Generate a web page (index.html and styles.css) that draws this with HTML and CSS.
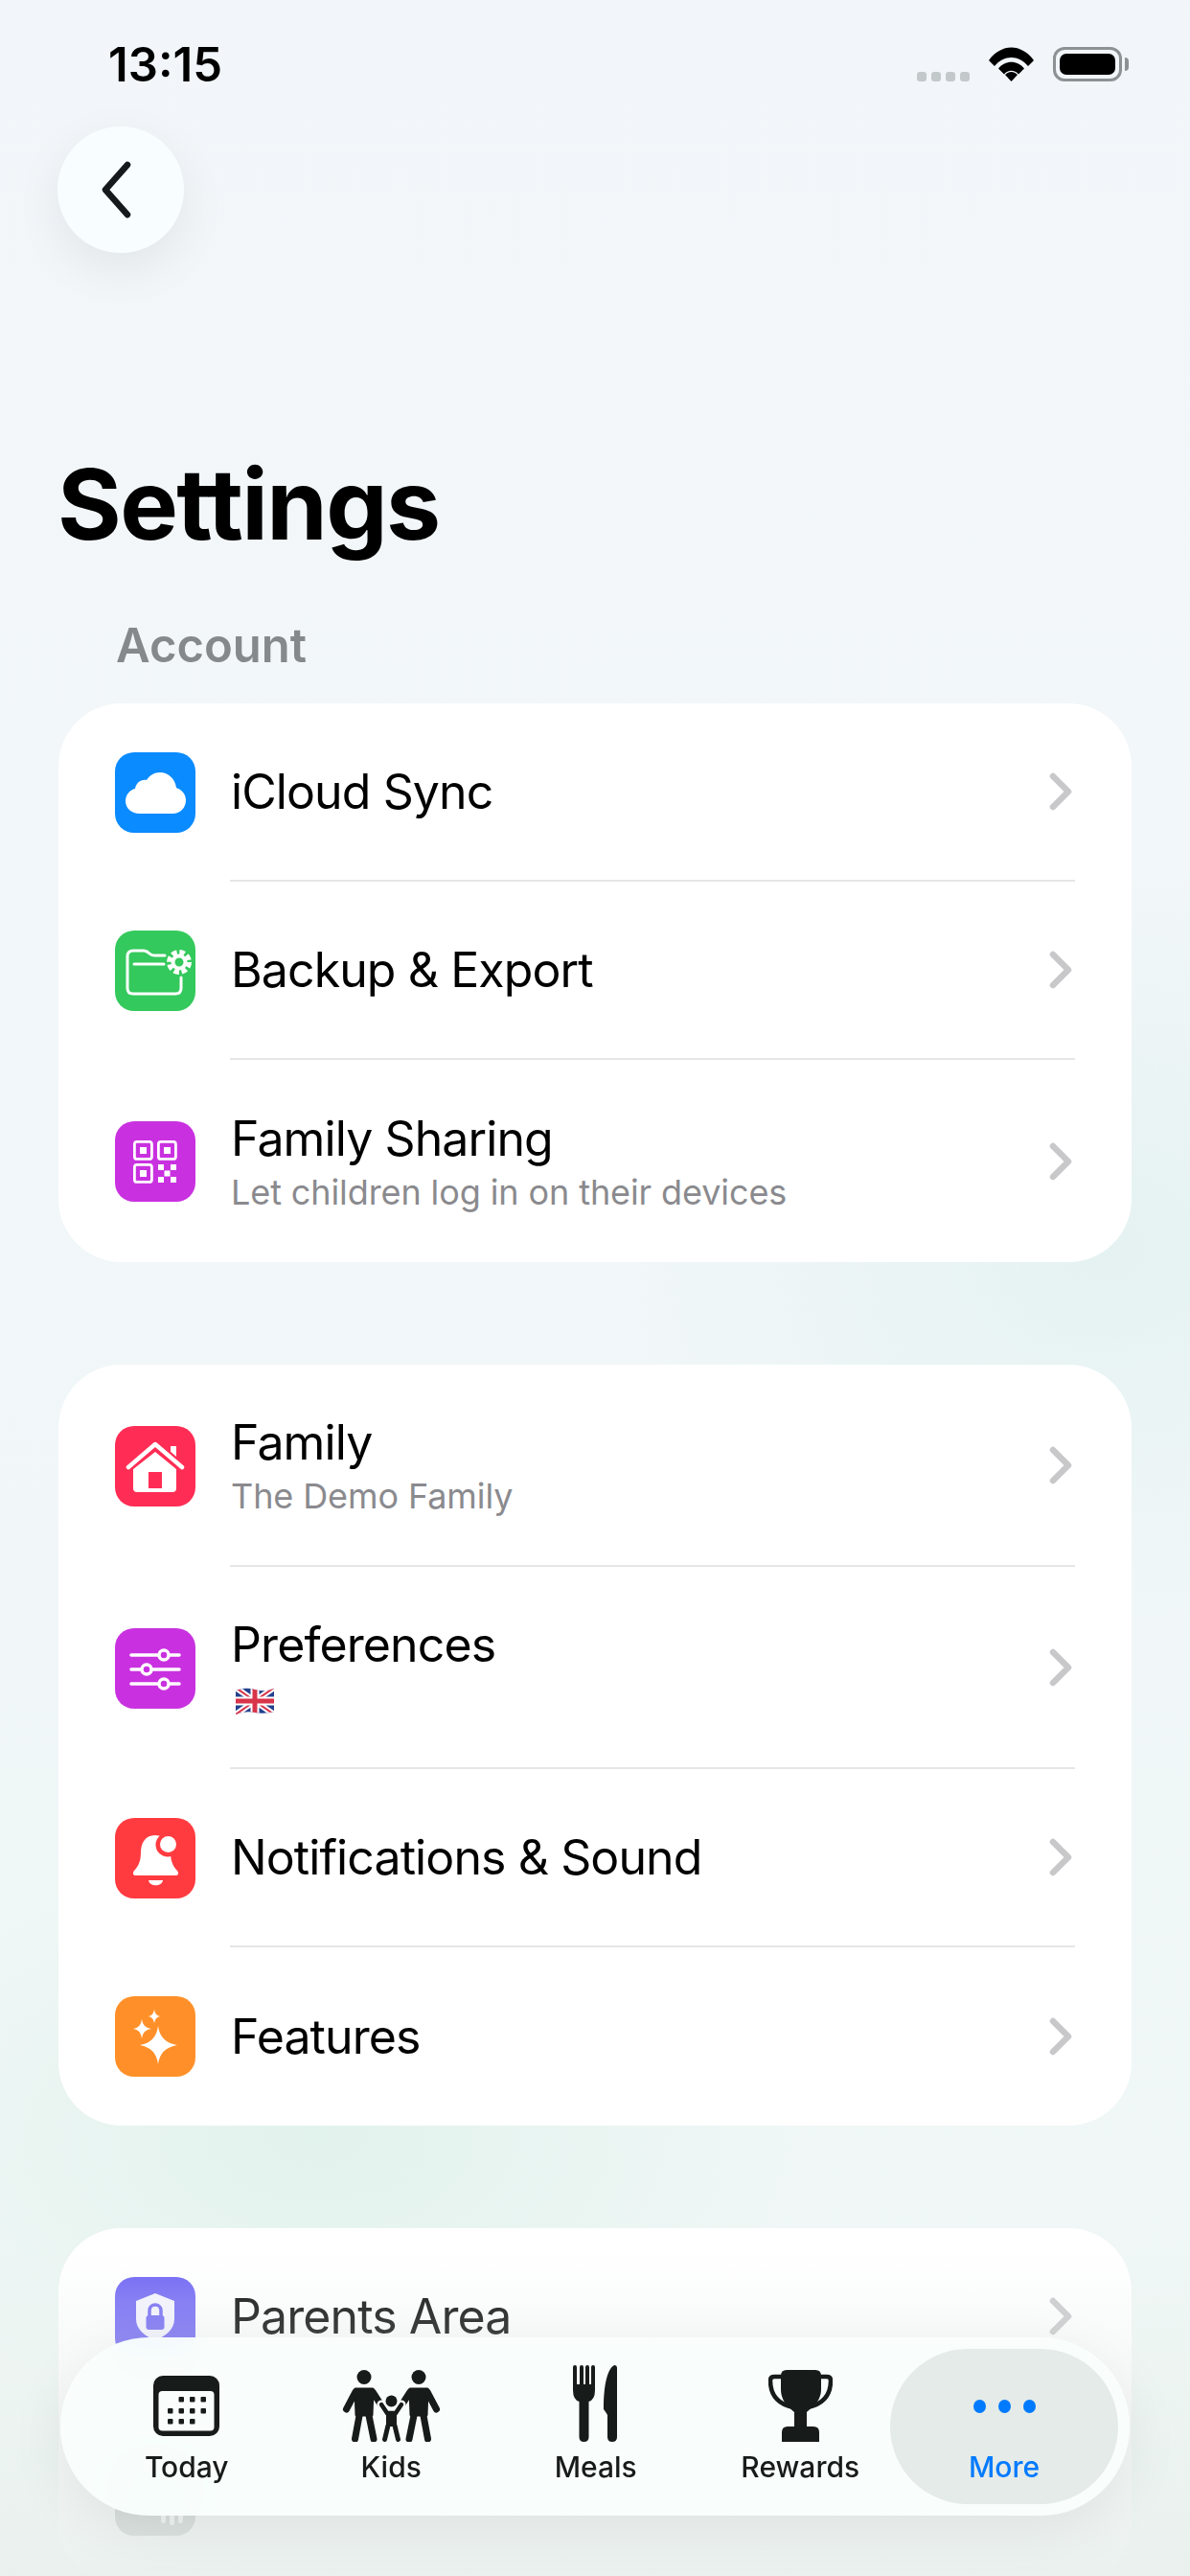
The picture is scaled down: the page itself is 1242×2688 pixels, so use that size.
FILE: index.html
```html
<!DOCTYPE html>
<html lang="en">
<head>
	<meta charset="UTF-8" />
	<meta name="viewport" content="width=device-width, initial-scale=1.0" />
	<title>Settings</title>
	<link rel="stylesheet" href="styles.css">
</head>
<body>
<div class="screen">
	<div class="status">
		<span class="time">13:15</span>
		<div class="status-icons">
			<div class="signal"><i></i><i></i><i></i><i></i></div>
			<svg class="wifi" width="47" height="36" viewBox="0 0 47 36">
				<path d="M0 14 C13 -4 34 -4 47 14 L41 20 C31 8 16 8 6 20 Z" fill="#000"/>
				<path d="M10 24 C17 15 30 15 37 24 L31 30 C27 25 20 25 16 30 Z" transform="translate(0 -1.5)" fill="#000"/>
				<path d="M17 29 C21 25 26 25 30 29 L23.500 36 Z" fill="#000"/>
			</svg>
			<div class="battery"><div class="battery-fill"></div></div>
			<div class="battery-cap"></div>
		</div>
	</div>

	<button class="back">
		<svg width="44" height="66" viewBox="0 0 44 66"><path d="M34 7 L11 33 L34 59" fill="none" stroke="#15191b" stroke-width="6.500" stroke-linecap="round" stroke-linejoin="round"/></svg>
	</button>

	<h1 class="title">Settings</h1>
	<div class="section-label">Account</div>

	<div class="card">
		<div class="row">
			<div class="icon blue">
				<svg width="84" height="84" viewBox="0 0 84 84"><path d="M26 64 C17 64 11 58 11 51 C11 44 16 39 21 38 C22 32 27 28 33 29 C36 24 41 21 47 21 C56 21 63 28 64 37 C70 39 74 44 74 50 C74 58 68 64 60 64 Z" fill="#fff"/></svg>
			</div>
			<div class="row-body">
				<div class="row-text"><div class="row-title">iCloud Sync</div></div>
				<svg class="chevron" width="25" height="40" viewBox="0 0 25 40"><path d="M4 4 L20 20 L4 36" /></svg>
			</div>
		</div>
		<div class="row">
			<div class="icon green">
				<svg width="84" height="84" viewBox="0 0 84 84">
					<path d="M69 49 V60 Q69 66 63 66 H19 Q13 66 13 60 V27 Q13 21 19 21 H30 Q33 21 36 24 Q38 26 41 26 H52 M20 35 H51" fill="none" stroke="#fff" stroke-width="3" stroke-linecap="round"/>
					<circle cx="67" cy="33" r="14" fill="#34c95c"/>
					<circle cx="67" cy="33" r="10.500" fill="none" stroke="#fff" stroke-width="5" stroke-dasharray="5.500 2.750"/>
					<circle cx="67" cy="33" r="6.500" fill="none" stroke="#fff" stroke-width="4"/>
				</svg>
			</div>
			<div class="row-body">
				<div class="row-text"><div class="row-title">Backup &amp; Export</div></div>
				<svg class="chevron" width="25" height="40" viewBox="0 0 25 40"><path d="M4 4 L20 20 L4 36" /></svg>
			</div>
		</div>
		<div class="row tall last">
			<div class="icon purple">
				<svg width="84" height="84" viewBox="0 0 84 84">
					<g fill="none" stroke="#fff" stroke-width="2.800">
						<rect x="20.400" y="21.400" width="18" height="18" rx="2.500"/>
						<rect x="45.400" y="21.400" width="18" height="18" rx="2.500"/>
						<rect x="20.400" y="45.400" width="18" height="18" rx="2.500"/>
					</g>
					<g fill="#fff">
						<rect x="26" y="27" width="7" height="7"/>
						<rect x="51" y="27" width="7" height="7"/>
						<rect x="26" y="51" width="7" height="7"/>
						<rect x="45" y="45" width="6" height="6"/>
						<rect x="58" y="45" width="6" height="6"/>
						<rect x="51.500" y="51.500" width="6" height="6"/>
						<rect x="45" y="58" width="6" height="6"/>
						<rect x="58" y="58" width="6" height="6"/>
					</g>
				</svg>
			</div>
			<div class="row-body">
				<div class="row-text">
					<div class="row-title">Family Sharing</div>
					<div class="row-sub">Let children log in on their devices</div>
				</div>
				<svg class="chevron" width="25" height="40" viewBox="0 0 25 40"><path d="M4 4 L20 20 L4 36" /></svg>
			</div>
		</div>
	</div>

	<div class="card">
		<div class="row tall">
			<div class="icon pink">
				<svg width="84" height="84" viewBox="0 0 84 84">
					<path d="M19 45 L42 27 L64 45 V65 Q64 69 60 69 H23 Q19 69 19 65 Z" fill="#fff"/>
					<rect x="35" y="48" width="14" height="17" fill="#ff2d55"/>
					<path d="M58 30 V21 H64 V34 Z" fill="#fff"/>
					<path d="M14 43 L42 19 L70 43" fill="none" stroke="#ff2d55" stroke-width="9" stroke-linecap="round" stroke-linejoin="round"/>
					<path d="M14 43 L42 19 L70 43" fill="none" stroke="#fff" stroke-width="4.500" stroke-linecap="round" stroke-linejoin="round"/>
				</svg>
			</div>
			<div class="row-body">
				<div class="row-text">
					<div class="row-title">Family</div>
					<div class="row-sub">The Demo Family</div>
				</div>
				<svg class="chevron" width="25" height="40" viewBox="0 0 25 40"><path d="M4 4 L20 20 L4 36" /></svg>
			</div>
		</div>
		<div class="row tall">
			<div class="icon purple">
				<svg width="84" height="84" viewBox="0 0 84 84">
					<path d="M17 28 H67 M17 43 H67 M17 58 H67" stroke="#fff" stroke-width="3.500" stroke-linecap="round"/>
					<g fill="#c931e0" stroke="#fff" stroke-width="3.500">
						<circle cx="51" cy="28" r="5"/>
						<circle cx="33" cy="43" r="5"/>
						<circle cx="51" cy="58" r="5"/>
					</g>
				</svg>
			</div>
			<div class="row-body">
				<div class="row-text">
					<div class="row-title">Preferences</div>
					<svg class="flag" width="40" height="28" viewBox="0 0 40 28">
						<defs><clipPath id="wave"><path d="M0 3 Q10 -1 20 2 T40 1 V25 Q30 28 20 26 T0 28 Z"/></clipPath></defs>
						<g clip-path="url(#wave)">
							<rect width="40" height="28" fill="#24408e"/>
							<path d="M0 0 L40 28 M40 0 L0 28" stroke="#fff" stroke-width="6"/>
							<path d="M0 0 L40 28 M40 0 L0 28" stroke="#d8344a" stroke-width="2"/>
							<path d="M20 0 V28 M0 14 H40" stroke="#fff" stroke-width="9"/>
							<path d="M20 0 V28 M0 14 H40" stroke="#d8344a" stroke-width="5"/>
						</g>
					</svg>
				</div>
				<svg class="chevron" width="25" height="40" viewBox="0 0 25 40"><path d="M4 4 L20 20 L4 36" /></svg>
			</div>
		</div>
		<div class="row">
			<div class="icon red">
				<svg width="84" height="84" viewBox="0 0 84 84">
					<path d="M42 18 C31 18 27 27 27 36 C27 47 23 52 20 55 C18 58 19 60 22 60 H63 C66 60 67 58 65 55 C62 52 58 47 58 36 C58 27 53 18 42 18 Z" fill="#fff"/>
					<path d="M35 65 H50 C49 72 36 72 35 65 Z" fill="#fff"/>
					<circle cx="55" cy="28" r="12.500" fill="#ff3b40"/>
					<circle cx="55.500" cy="27.500" r="8.500" fill="#fff"/>
				</svg>
			</div>
			<div class="row-body">
				<div class="row-text"><div class="row-title">Notifications &amp; Sound</div></div>
				<svg class="chevron" width="25" height="40" viewBox="0 0 25 40"><path d="M4 4 L20 20 L4 36" /></svg>
			</div>
		</div>
		<div class="row last">
			<div class="icon orange">
				<svg width="84" height="84" viewBox="0 0 84 84" fill="#fff">
					<path d="M45 31 Q47 48 65 51 Q47 54 45 71 Q43 54 26 51 Q43 48 45 31 Z"/>
					<path d="M28 24 Q29 33 38 34 Q29 35 28 44 Q27 35 19 34 Q27 33 28 24 Z"/>
					<path d="M41 14 Q42 20 47 21 Q42 22 41 28 Q40 22 35 21 Q40 20 41 14 Z"/>
				</svg>
			</div>
			<div class="row-body">
				<div class="row-text"><div class="row-title">Features</div></div>
				<svg class="chevron" width="25" height="40" viewBox="0 0 25 40"><path d="M4 4 L20 20 L4 36" /></svg>
			</div>
		</div>
	</div>

	<div class="card">
		<div class="row">
			<div class="icon indigo">
				<svg width="84" height="84" viewBox="0 0 84 84">
					<path d="M42 17 L62 25 V44 C62 55 52 62 42 66 C32 62 22 55 22 44 V25 Z" fill="#fff" fill-opacity="0.92"/>
					<path d="M36 41 V35 C36 27 48 27 48 35 V41" fill="none" stroke="#6e63f5" stroke-width="3.500"/>
					<rect x="32.500" y="40" width="19" height="15" rx="3" fill="#6e63f5"/>
				</svg>
			</div>
			<div class="row-body">
				<div class="row-text"><div class="row-title">Parents Area</div></div>
				<svg class="chevron" width="25" height="40" viewBox="0 0 25 40"><path d="M4 4 L20 20 L4 36" /></svg>
			</div>
		</div>
		<div class="row last">
			<div class="icon gray">
				<svg width="84" height="84" viewBox="0 0 84 84" fill="#fff">
					<rect x="48" y="60" width="5" height="11" rx="2.500"/>
					<rect x="57" y="60" width="5" height="13" rx="2.500"/>
					<rect x="66" y="60" width="5" height="11" rx="2.500"/>
				</svg>
			</div>
		</div>
	</div>

	<div class="fade"></div>

	<nav class="tabbar">
		<div class="tab">
			<svg class="tab-icon" width="69" height="75" viewBox="0 0 69 75">
				<rect x="0" y="6" width="69" height="63" rx="10" fill="#171c1a"/>
				<rect x="5.500" y="22" width="58" height="41.500" rx="4" fill="#f9fdfb"/>
				<g fill="#171c1a">
					<rect x="26.500" y="28" width="5.500" height="5.500" rx="1"/><rect x="38" y="28" width="5.500" height="5.500" rx="1"/><rect x="49.500" y="28" width="5.500" height="5.500" rx="1"/>
					<rect x="15" y="40" width="5.500" height="5.500" rx="1"/><rect x="26.500" y="40" width="5.500" height="5.500" rx="1"/><rect x="38" y="40" width="5.500" height="5.500" rx="1"/><rect x="49.500" y="40" width="5.500" height="5.500" rx="1"/>
					<rect x="15" y="51" width="5.500" height="5.500" rx="1"/><rect x="26.500" y="51" width="5.500" height="5.500" rx="1"/><rect x="38" y="51" width="5.500" height="5.500" rx="1"/>
				</g>
			</svg>
			<span>Today</span>
		</div>
		<div class="tab">
			<svg class="tab-icon" width="103" height="75" viewBox="0 0 103 75">
				<g id="adult" fill="#171c1a" stroke="#171c1a" stroke-linecap="round">
					<circle cx="23" cy="7.500" r="7.500" stroke="none"/>
					<path d="M14 20 H32 L31 47 H15 Z" stroke-width="3" stroke-linejoin="round"/>
					<path d="M14 23 L4.500 41 M32 23 L41 37" stroke-width="7" fill="none"/>
					<path d="M18.500 45 L13.500 72 M27.500 45 L33 72" stroke-width="7" fill="none"/>
				</g>
				<use href="#adult" transform="matrix(-1 0 0 1 103 0)"/>
				<g fill="#171c1a" stroke-linecap="round">
					<path d="M41 36 L47 45 V57 L44 73 M62 36 L56 45 V57 L59 73" fill="none" stroke="#f9fdfb" stroke-width="9"/>
					<circle cx="51.500" cy="32.500" r="6"/>
					<path d="M41 36 L47 45 H56 L62 36" fill="none" stroke="#171c1a" stroke-width="4.500"/>
					<rect x="46" y="44" width="11" height="15"/>
					<path d="M48 58 L44.500 72.500 M55 58 L58.500 72.500" fill="none" stroke="#171c1a" stroke-width="5"/>
				</g>
			</svg>
			<span>Kids</span>
		</div>
		<div class="tab">
			<svg class="tab-icon" width="48" height="80" viewBox="0 0 48 80">
				<path d="M0 2 Q0 0 2 0 Q4 0 4 2 V20 H7 V2 Q7 0 9 0 Q11 0 11 2 V20 H13 V2 Q13 0 15 0 Q17 0 17 2 V20 H19 V2 Q19 0 21 0 Q23 0 23 2 V26 Q23 36 16.500 38 V75 Q16.500 80 11.500 80 Q6.500 80 6.500 75 V38 Q0 36 0 26 Z" fill="#171c1a"/>
				<path d="M46 3 Q46 0 43 0 C36 4 32 20 32 46 Q35 50 36 52 V75 Q36 80 41 80 Q46 80 46 75 Z" fill="#171c1a"/>
			</svg>
			<span>Meals</span>
		</div>
		<div class="tab">
			<svg class="tab-icon" width="67" height="75" viewBox="0 0 67 75">
				<path d="M14 7 H6 Q2 7 2 11 Q2 34 26 39 M53 7 H61 Q65 7 65 11 Q65 34 41 39" fill="none" stroke="#171c1a" stroke-width="4.500"/>
				<path d="M13 6 Q13 0 19 0 H49 Q55 0 55 6 V20 C55 34 44 40 40 44 V59 H27 V44 C23 40 13 34 13 20 Z" fill="#171c1a"/>
				<path d="M20 59 Q14 59 14 65 V75 H53 V65 Q53 59 47 59 Z" fill="#171c1a"/>
			</svg>
			<span>Rewards</span>
		</div>
		<div class="tab active">
			<div class="more-dots"><i></i><i></i><i></i></div>
			<span>More</span>
		</div>
	</nav>
</div>
</body>
</html>
```

FILE: styles.css
```css
* {
	box-sizing: border-box;
}

body {
	margin: 0;
	font-family: Inter, "Noto Sans", sans-serif;
	color: #000;
}

.screen {
	position: relative;
	width: 1242px;
	height: 2688px;
	overflow: hidden;
	background:
		radial-gradient(ellipse 500px 400px at 1150px 1300px, rgba(205, 232, 228, 0.35), transparent),
		radial-gradient(ellipse 500px 300px at 330px 2230px, rgba(205, 235, 222, 0.4), transparent),
		linear-gradient(180deg, #f2f6fa 0%, #f2f7f9 40%, #eff7f5 100%);
}

/* status bar */
.status {
	display: flex;
	justify-content: space-between;
	height: 132px;
	padding: 40px 64px 0 113px;
}

.time {
	font-size: 49px;
	font-weight: 600;
	line-height: 56px;
}

.status-icons {
	display: flex;
	align-items: flex-start;
	padding-top: 9px;
}

.signal {
	display: flex;
	gap: 5px;
	margin: 26px 20px 0 0;
}

.signal i {
	width: 10px;
	height: 10px;
	border-radius: 3px;
	background-color: #c3c8ca;
}

.wifi {
	margin-right: 20px;
}

.battery {
	width: 72px;
	height: 36px;
	padding: 4px;
	border: 3px solid #8e9193;
	border-radius: 12px;
}

.battery-fill {
	height: 100%;
	background-color: #000;
	border-radius: 7px;
}

.battery-cap {
	width: 4px;
	height: 14px;
	margin: 11px 0 0 3px;
	background-color: #8e9193;
	border-radius: 0 4px 4px 0;
}

/* header */
.back {
	display: flex;
	align-items: center;
	justify-content: center;
	width: 132px;
	height: 132px;
	margin-left: 60px;
	padding: 0 10px 0 0;
	border: none;
	border-radius: 50%;
	background-color: #f8fdff;
	box-shadow: 0 16px 50px rgba(0, 0, 0, 0.07);
}

.title {
	margin: 200px 0 0 60px;
	font-size: 102px;
	font-weight: 700;
	line-height: 124px;
	letter-spacing: -1.6px;
}

.section-label {
	margin: 51px 0 0 121px;
	font-size: 49px;
	font-weight: 600;
	line-height: 70px;
	color: #85898b;
}

/* cards */
.card {
	width: 1120px;
	margin: 0 0 107px 61px;
	border-radius: 66px;
	background-color: #fff;
}

.section-label + .card {
	margin-top: 25px;
}

.row {
	display: flex;
	align-items: center;
	gap: 36px;
	height: 186px;
	padding: 0 59px;
}

.row.tall {
	height: 211px;
}

.icon {
	flex: none;
	width: 84px;
	height: 84px;
	border-radius: 20px;
}

.icon svg {
	display: block;
}

.blue { background-color: #0a8bff; }
.green { background-color: #34c95c; }
.purple { background-color: #c931e0; }
.pink { background-color: #ff2d55; }
.red { background-color: #ff3b40; }
.orange { background-color: #ff9029; }
.indigo { background-color: #6e63f5; }
.gray { background-color: #a5aaa8; }

.row-body {
	display: flex;
	align-items: center;
	justify-content: space-between;
	flex: 1;
	align-self: stretch;
	padding-right: 2px;
	border-bottom: 2px solid #e5e6e7;
}

.last .row-body {
	border-bottom: none;
}

.row-text {
	padding-left: 1px;
}

.row-title {
	font-size: 50px;
	line-height: 62px;
	letter-spacing: -0.9px;
}

.row-sub {
	margin-top: 2px;
	font-size: 36px;
	line-height: 46px;
	letter-spacing: -0.1px;
	color: #8a8a8e;
}

.flag {
	display: block;
	margin: 14px 0 5px 5px;
}

.chevron path {
	fill: none;
	stroke: #c8c8ca;
	stroke-width: 6.500;
	stroke-linecap: round;
	stroke-linejoin: round;
}

/* content fades out behind the tab bar */
.fade {
	position: absolute;
	left: 0;
	right: 0;
	top: 2350px;
	bottom: 0;
	background: linear-gradient(180deg, rgba(233, 240, 237, 0) 0%, rgba(233, 240, 237, 0.2) 15%, rgba(233, 240, 237, 0.32) 33%, rgba(233, 240, 237, 0.8) 88%, rgba(233, 240, 237, 0.95) 100%);
}

/* tab bar */
.tabbar {
	position: absolute;
	left: 63px;
	top: 2439px;
	display: flex;
	align-items: center;
	width: 1116px;
	height: 186px;
	padding: 0 12px 0 25px;
	border-radius: 93px;
	background-color: rgba(249, 254, 252, 0.95);
	box-shadow: 0 14px 60px rgba(0, 0, 0, 0.07);
	backdrop-filter: blur(24px);
}

.tab {
	display: flex;
	flex: none;
	flex-direction: column;
	align-items: center;
	justify-content: flex-end;
	width: 213.500px;
	height: 162px;
	padding-bottom: 21px;
	font-size: 30px;
	font-weight: 500;
	line-height: 36px;
	color: #171c1a;
}

.tab-icon {
	display: block;
	margin-bottom: 8px;
}

.tab.active {
	width: 238px;
	margin-left: -13px;
	border-radius: 81px;
	background-color: #e5ebe8;
	color: #007aff;
}

.more-dots {
	display: flex;
	gap: 13px;
	margin-bottom: 38px;
}

.more-dots i {
	width: 13px;
	height: 14px;
	border-radius: 50%;
	background-color: #007aff;
}
```
